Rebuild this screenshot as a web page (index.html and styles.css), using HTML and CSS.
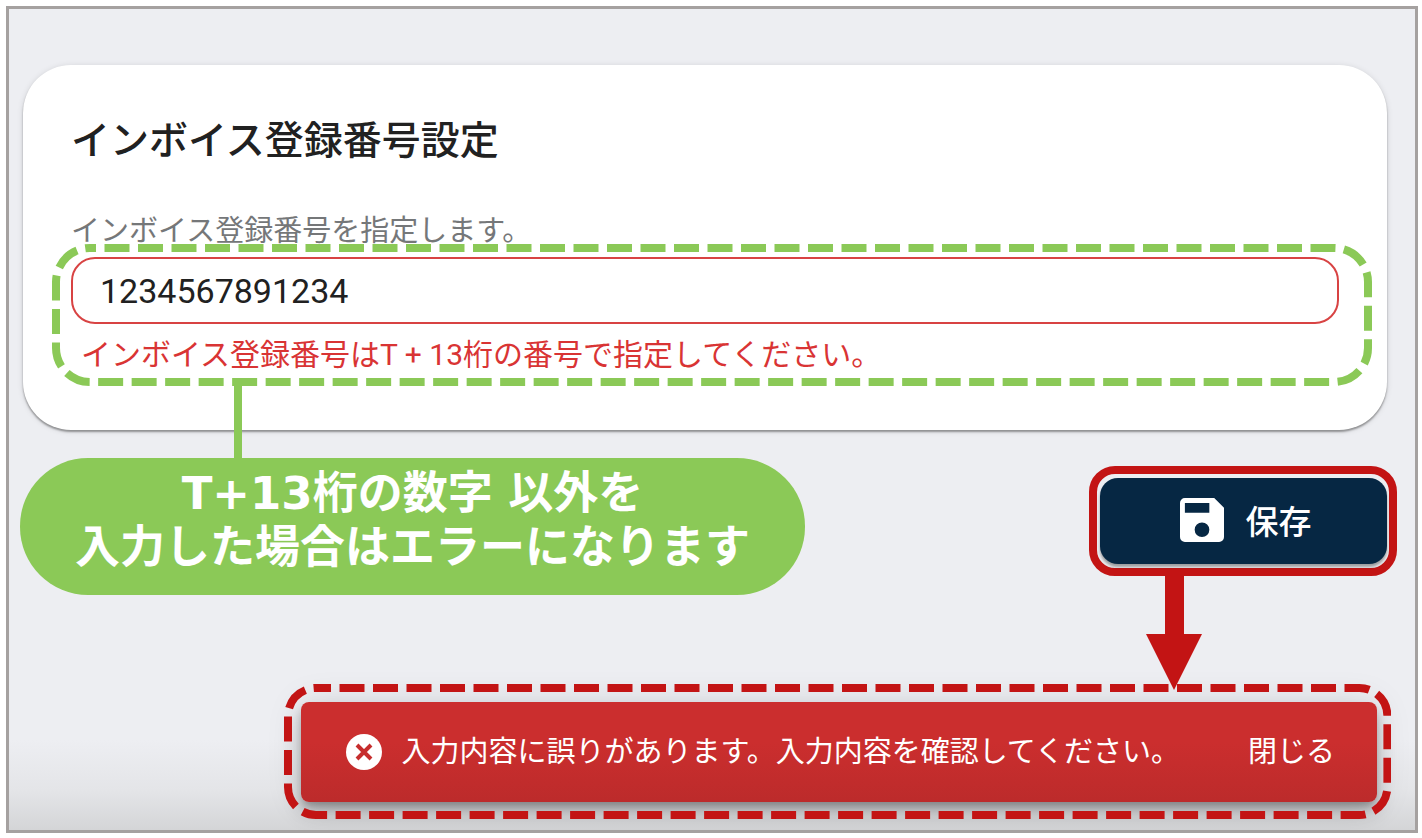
FILE: index.html
```
<!DOCTYPE html>
<html lang="ja">
<head>
  <meta charset="UTF-8">
  <meta name="viewport" content="width=device-width, initial-scale=1.0">
  <title>インボイス登録番号設定</title>
  <link rel="stylesheet" href="styles.css">
</head>
<body>
  <main class="frame">
    <!-- Settings card -->
    <section class="card">
      <h1>インボイス登録番号設定</h1>
      <label for="invoice-number">インボイス登録番号を指定します。</label>
      <div class="field">
        <input id="invoice-number" type="text" value="1234567891234" aria-invalid="true" aria-describedby="invoice-error">
        <p id="invoice-error" class="error">インボイス登録番号はT + 13桁の番号で指定してください。</p>
        <svg class="dashes dashes-green" aria-hidden="true">
          <rect x="4" y="4" rx="34" stroke-dasharray="25 8.5" stroke-dashoffset="19" />
        </svg>
      </div>
    </section>

    <!-- Callout and save button -->
    <div class="actions">
      <p class="callout">T+13桁の数字 以外を<br>入力した場合はエラーになります</p>
      <div class="save-ring">
        <button type="button" class="save">
          <svg class="save-icon" viewBox="3 3 18 18" aria-hidden="true">
            <path fill-rule="evenodd" d="M17 3H5a2 2 0 0 0-2 2v14a2 2 0 0 0 2 2h14a2 2 0 0 0 2-2V7zM12 19a3 3 0 1 1 0-6 3 3 0 0 1 0 6zM15 9H5V5h10z" />
          </svg>
          保存
        </button>
        <svg class="arrow" viewBox="0 0 56 114" aria-hidden="true">
          <path d="M19 0h19v58h18L28 114 0 58h19z" />
        </svg>
      </div>
    </div>

    <!-- Error message -->
    <div class="snackbar-ring">
      <div class="snackbar" role="alert">
        <svg class="cancel-icon" viewBox="0 0 36 36" aria-hidden="true">
          <circle cx="18" cy="18" r="18" />
          <path d="M11 11l14 14M25 11L11 25" />
        </svg>
        <p>入力内容に誤りがあります。入力内容を確認してください。</p>
        <button type="button" class="close">閉じる</button>
      </div>
      <svg class="dashes dashes-red" aria-hidden="true">
        <rect x="4" y="4" rx="28" stroke-dasharray="25 8.5" stroke-dashoffset="10" />
      </svg>
    </div>
  </main>
</body>
</html>
```
FILE: styles.css
```
/* General Styles */
* {
  box-sizing: border-box;
}

body {
  margin: 0;
  min-height: 100vh;
  padding: 6px 4px 5px 6px;
  display: flex;
  background-color: white;
  font-family: Roboto, "Noto Sans CJK JP", sans-serif;
  font-size: 29px;
  line-height: 40px;
}

h1,
p {
  margin: 0;
}

button,
input {
  font-family: inherit;
}

.frame {
  flex: 1;
  display: flex;
  flex-direction: column;
  padding: 56px 18px 11px 11px;
  border: 3px solid #a5a1a0;
  background: linear-gradient(to bottom, #edeef2 calc(100% - 90px), #e4e5e8 calc(100% - 40px), #d4d5d7);
  overflow: hidden;
}

/* Card */
.card {
  margin: 0 10px 0 3px;
  padding: 48px;
  border-radius: 48px;
  background-color: white;
  box-shadow: 0 2px 2px rgba(0, 0, 0, 0.35), 0 1px 6px rgba(0, 0, 0, 0.12);
}

.card h1 {
  margin-bottom: 42px;
  font-size: 39px;
  font-weight: 500;
  line-height: 56px;
  color: #212121;
}

.card label {
  display: block;
  color: #757779;
}

.field {
  position: relative;
  margin-top: 6px;
}

.field input {
  display: block;
  width: 100%;
  height: 67px;
  padding: 0 27px;
  border: 2px solid #d84343;
  border-radius: 24px;
  background-color: white;
  color: #212121;
  font-size: 34px;
}

.error {
  padding: 11px 10px 7px;
  color: #d93434;
  font-size: 30px;
}

/* Dashed outlines lie over the content */
.dashes {
  position: absolute;
  pointer-events: none;
}

.dashes rect {
  width: calc(100% - 8px);
  height: calc(100% - 8px);
  fill: none;
  stroke-width: 8px;
}

.dashes-green {
  top: -13px;
  left: -19px;
  width: calc(100% + 52px);
  height: 142px;
}

.dashes-green rect {
  stroke: #8bc957;
}

.dashes-red {
  top: 0;
  left: 0;
  width: 100%;
  height: 100%;
}

.dashes-red rect {
  stroke: #c31414;
}

/* Callout and save button */
.actions {
  display: flex;
  justify-content: space-between;
  align-items: flex-start;
  margin-top: 28px;
}

.callout {
  position: relative;
  padding: 9px 55px 20px;
  border-radius: 68px;
  background-color: #8bc957;
  color: white;
  font-family: "DejaVu Sans", "Noto Sans CJK JP", sans-serif;
  font-size: 45px;
  font-weight: bold;
  line-height: 54px;
  text-align: center;
}

.callout::before {
  content: "";
  position: absolute;
  bottom: 100%;
  left: 214px;
  width: 8px;
  height: 76px;
  background-color: #8bc957;
}

.save-ring {
  position: relative;
  margin-top: 8px;
  padding: 4px 2px 4px 3px;
  border: 8px solid #c31414;
  border-radius: 26px;
}

.save {
  display: flex;
  justify-content: center;
  align-items: center;
  gap: 22px;
  width: 287px;
  height: 86px;
  padding: 0 0 2px 4px;
  border: none;
  border-radius: 18px;
  background-color: #062743;
  box-shadow: 0 3px 3px rgba(0, 0, 0, 0.35);
  color: white;
  font-size: 33px;
  font-weight: 500;
  cursor: pointer;
}

.save-icon {
  width: 44px;
  height: 44px;
  fill: white;
}

.arrow {
  position: absolute;
  top: 100%;
  left: 49px;
  width: 56px;
  z-index: 1;
  margin-top: 8px;
  fill: #c31414;
}

/* Snackbar */
.snackbar-ring {
  position: relative;
  align-self: flex-end;
  margin: auto 6px 0 0;
  padding: 18px 14px 17px 17px;
}

.snackbar {
  display: flex;
  align-items: center;
  padding: 30px 42px 30px 45px;
  border-radius: 8px;
  background: linear-gradient(to bottom, #cb2e2e 40%, #bc2b2b);
  box-shadow: 0 6px 10px -2px rgba(0, 0, 0, 0.3), 0 12px 20px rgba(0, 0, 0, 0.14), 0 2px 36px rgba(0, 0, 0, 0.12);
  color: white;
}

.cancel-icon {
  width: 36px;
  height: 36px;
  margin-right: 20px;
  fill: white;
}

.cancel-icon path {
  stroke: #c62d2d;
  stroke-width: 4px;
}

.close {
  margin-left: 68px;
  padding: 0;
  border: none;
  background: none;
  color: white;
  font-size: 29px;
  line-height: 40px;
  cursor: pointer;
}
```
